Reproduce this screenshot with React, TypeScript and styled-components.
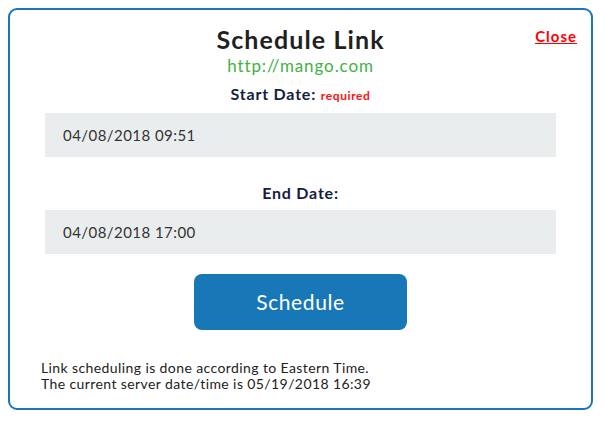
import React from "react";
import styled, { createGlobalStyle } from "styled-components";

const Global = createGlobalStyle`
  html, body { margin: 0; padding: 0; background: #ffffff; }
  body { padding: 8px; font-family: "Lato", "Open Sans", sans-serif; color: #222; }
  * { box-sizing: border-box; }
`;

const Dialog = styled.div`
  position: relative;
  width: 585px;
  height: 402px;
  border: 2px solid #1a75bb;
  border-radius: 9px;
  background: #fff;
  display: flex;
  flex-direction: column;
  align-items: center;
  padding: 14px 35px 0;
`;

const CloseLink = styled.a`
  position: absolute;
  top: 17px;
  right: 14px;
  color: #ff0000;
  font-weight: 700;
  font-size: 15px;
  letter-spacing: 1px;
  text-decoration: underline;
  cursor: pointer;
`;

const Title = styled.h1`
  margin: 0;
  font-size: 25px;
  line-height: 30px;
  font-weight: 700;
  letter-spacing: 1.1px;
  color: #231f1c;
`;

const Url = styled.div`
  margin-top: 2px;
  font-size: 17px;
  line-height: 20px;
  letter-spacing: 0.9px;
  color: #44b044;
`;

const Label = styled.div<{ $top: number }>`
  margin-top: ${(p) => p.$top}px;
  font-size: 16px;
  line-height: 20px;
  font-weight: 700;
  letter-spacing: 0.8px;
  color: #14213d;
`;

const Required = styled.span`
  color: #ff1010;
  font-size: 12px;
  font-weight: 700;
  letter-spacing: 0.6px;
`;

const DateInput = styled.input`
  margin-top: 7px;
  width: 100%;
  height: 44px;
  border: none;
  outline: none;
  background: #eaedee;
  padding: 0 18px;
  font-family: inherit;
  font-size: 15px;
  letter-spacing: 0.45px;
  color: #333;
`;

const ScheduleButton = styled.button`
  margin-top: 20px;
  width: 213px;
  height: 56px;
  border: none;
  border-radius: 8px;
  background: #1878b7;
  color: #fff;
  font-family: inherit;
  font-size: 21px;
  letter-spacing: 0.6px;
  padding-bottom: 3px;
  cursor: pointer;
`;

const Footer = styled.div`
  align-self: stretch;
  margin-top: 30px;
  margin-left: -4px;
  font-size: 14px;
  line-height: 16px;
  letter-spacing: 0.4px;
  color: #222;
`;

export default function App() {
  return (
    <>
      <Global />
      <Dialog>
        <CloseLink>Close</CloseLink>
        <Title>Schedule Link</Title>
        <Url>http://mango.com</Url>
        <Label $top={8}>
          Start Date: <Required>required</Required>
        </Label>
        <DateInput readOnly defaultValue="04/08/2018 09:51" />
        <Label $top={26}>End Date:</Label>
        <DateInput readOnly defaultValue="04/08/2018 17:00" />
        <ScheduleButton>Schedule</ScheduleButton>
        <Footer>
          Link scheduling is done according to Eastern Time.
          <br />
          The current server date/time is 05/19/2018 16:39
        </Footer>
      </Dialog>
    </>
  );
}
